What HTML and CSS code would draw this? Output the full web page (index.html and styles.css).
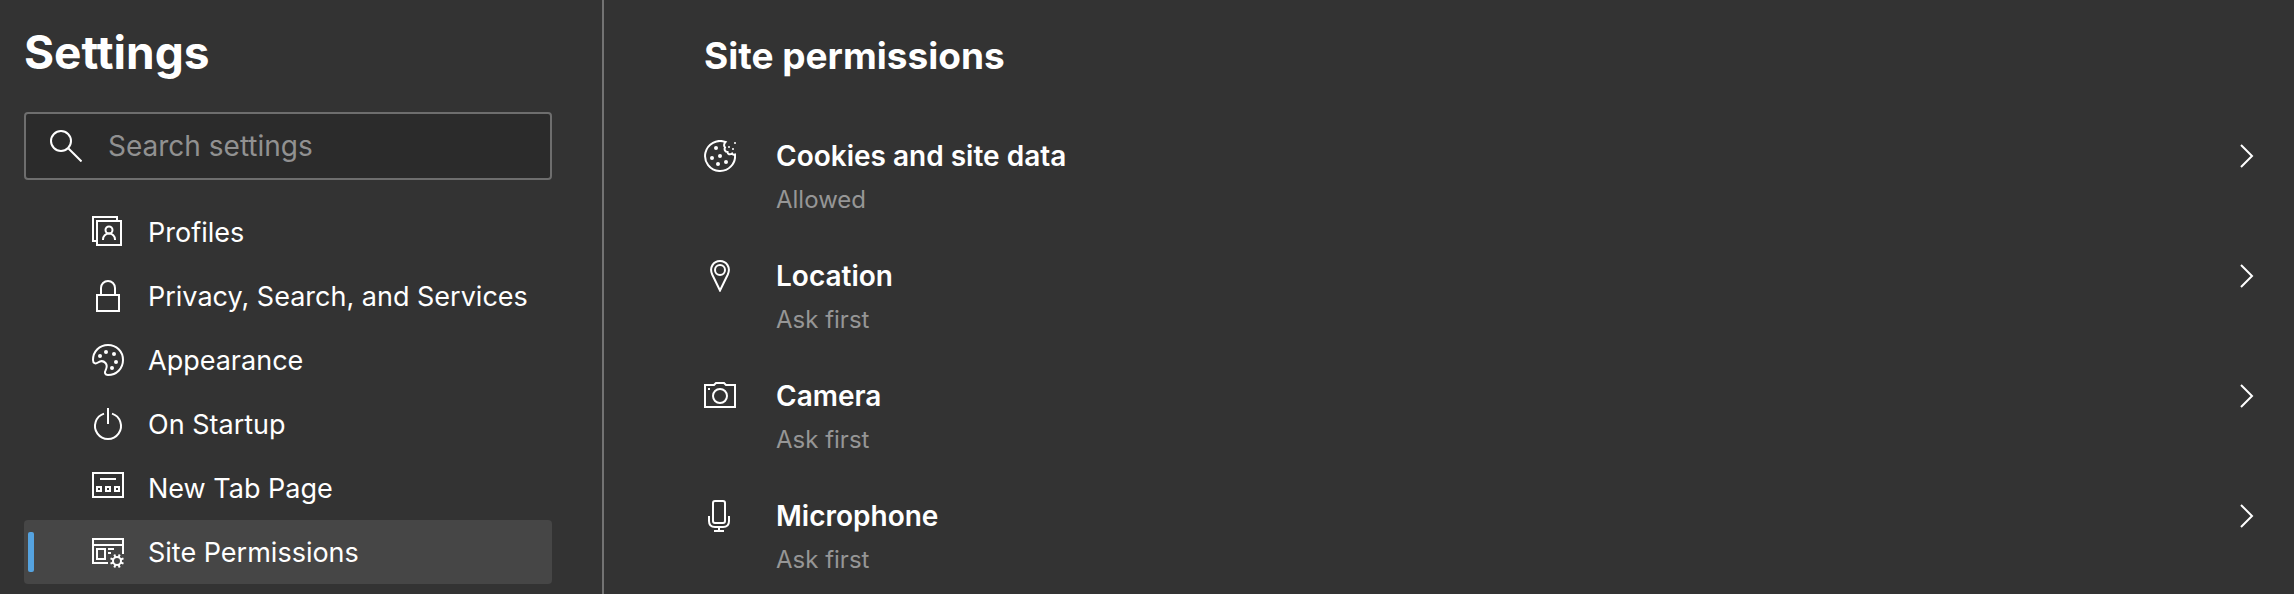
FILE: index.html
```html
<!DOCTYPE html>
<html lang="en">
<head>
  <meta charset="UTF-8" />
  <meta name="viewport" content="width=device-width, initial-scale=1.0"/>
  <title>Settings</title>
  <link rel="stylesheet" href="styles.css">
</head>
<body>

  <!-- Sidebar -->
  <aside class="sidebar">
    <h1 class="sidebar-title">Settings</h1>

    <label class="search">
      <svg class="icon" viewBox="0 0 32 32" aria-hidden="true">
        <circle cx="11" cy="11" r="10"/>
        <path d="M18.5 18.5L31.5 31.5"/>
      </svg>
      <input class="search-input" type="search" placeholder="Search settings" aria-label="Search settings">
    </label>

    <nav class="nav">
      <a class="nav-item" href="#profiles">
        <svg class="icon" viewBox="0 0 32 32" aria-hidden="true">
          <path d="M4 25H1V1H25V4"/>
          <rect x="5" y="5" width="24" height="24"/>
          <circle cx="17" cy="14" r="3.5"/>
          <path d="M11 24V23.5a6 6 0 0 1 12 0V24"/>
        </svg>
        Profiles
      </a>
      <a class="nav-item" href="#privacy">
        <svg class="icon" viewBox="0 0 32 32" aria-hidden="true">
          <rect x="5" y="15" width="22" height="16"/>
          <path d="M9 15V8a7 7 0 0 1 14 0V15"/>
        </svg>
        Privacy, Search, and Services
      </a>
      <a class="nav-item" href="#appearance">
        <svg class="icon" viewBox="0 0 32 32" aria-hidden="true">
          <path d="M1 16C1 7.5 7.5 1 16 1S31 7.5 31 16S24.5 31 16 31C13 31 12.3 28.5 13.5 26.5C15 23.5 15.3 21 13.5 19C11.5 16.8 8.5 16.8 6 18.5C3.5 20.2 1 19.5 1 16Z"/>
          <g class="fill">
            <circle cx="8" cy="12" r="2"/>
            <circle cx="14" cy="8" r="2"/>
            <circle cx="22" cy="10" r="2"/>
            <circle cx="24" cy="18" r="2"/>
            <circle cx="20" cy="24" r="2"/>
          </g>
        </svg>
        Appearance
      </a>
      <a class="nav-item" href="#startup">
        <svg class="icon" viewBox="0 0 32 32" aria-hidden="true">
          <path d="M12 5.6A13 13 0 1 0 20 5.6"/>
          <path d="M16 0V16"/>
        </svg>
        On Startup
      </a>
      <a class="nav-item" href="#newtab">
        <svg class="icon" viewBox="0 0 32 32" aria-hidden="true">
          <rect x="1" y="1" width="30" height="24"/>
          <path d="M8 7H24"/>
          <rect x="5" y="15" width="4" height="4"/>
          <rect x="14" y="15" width="4" height="4"/>
          <rect x="23" y="15" width="4" height="4"/>
        </svg>
        New Tab Page
      </a>
      <a class="nav-item active" href="#permissions" aria-current="page">
        <svg class="icon" viewBox="0 0 32 32" aria-hidden="true">
          <path d="M16 27H1V3H31V18M1 9H31"/>
          <rect x="5" y="13" width="8" height="10"/>
          <path d="M16 13H22M16 17H19"/>
          <circle cx="25" cy="25" r="4"/>
          <path d="M26.5 21.3L27.7 18.5M28.7 23.5L31.5 22.3M28.7 26.5L31.5 27.7M26.5 28.7L27.7 31.5M23.5 28.7L22.3 31.5M21.3 26.5L18.5 27.7M21.3 23.5L18.5 22.3M23.5 21.3L22.3 18.5"/>
        </svg>
        Site Permissions
      </a>
    </nav>
  </aside>

  <!-- Site permissions -->
  <main class="content">
    <h2 class="content-title">Site permissions</h2>

    <div class="permissions">
      <button class="permission" type="button">
        <svg class="icon" viewBox="0 0 32 32" aria-hidden="true">
          <path d="M21.5 2A15 15 0 1 0 31 14.5C29.5 15 28.5 14.5 28 13.5C26 15 23.5 14.3 23.5 12C21 12 20 9.5 21 7.5C19.5 6 20 3.5 21.5 2Z"/>
          <g class="fill">
            <circle cx="12" cy="8" r="2"/>
            <circle cx="8" cy="18" r="2"/>
            <circle cx="16" cy="16" r="2"/>
            <circle cx="14" cy="24" r="2"/>
            <circle cx="22" cy="22" r="2"/>
            <circle cx="31" cy="3" r="1"/>
            <circle cx="25" cy="7" r="1"/>
            <circle cx="29" cy="9" r="1"/>
          </g>
        </svg>
        <span class="permission-text">
          <span class="permission-name">Cookies and site data</span>
          <span class="permission-state">Allowed</span>
        </span>
        <svg class="chevron" viewBox="0 0 16 24" aria-hidden="true"><path d="M3 1L14 12L3 23"/></svg>
      </button>

      <button class="permission" type="button">
        <svg class="icon" viewBox="0 0 32 32" aria-hidden="true">
          <path d="M16 30.5L8.2 14.5C5 7.5 9.5 1 16 1S27 7.5 23.8 14.5Z"/>
          <circle cx="16" cy="10" r="5"/>
        </svg>
        <span class="permission-text">
          <span class="permission-name">Location</span>
          <span class="permission-state">Ask first</span>
        </span>
        <svg class="chevron" viewBox="0 0 16 24" aria-hidden="true"><path d="M3 1L14 12L3 23"/></svg>
      </button>

      <button class="permission" type="button">
        <svg class="icon" viewBox="0 0 32 32" aria-hidden="true">
          <path d="M1 5H10L12 3H20L22 5H31V27H1Z"/>
          <circle cx="16" cy="16" r="7"/>
          <rect class="fill" x="4" y="8" width="2" height="2"/>
        </svg>
        <span class="permission-text">
          <span class="permission-name">Camera</span>
          <span class="permission-state">Ask first</span>
        </span>
        <svg class="chevron" viewBox="0 0 16 24" aria-hidden="true"><path d="M3 1L14 12L3 23"/></svg>
      </button>

      <button class="permission" type="button">
        <svg class="icon" viewBox="0 0 32 32" aria-hidden="true">
          <rect x="9" y="1" width="12" height="22" rx="2"/>
          <path d="M5 16V21C5 25 7 27 11 27H19C23 27 25 25 25 21V16"/>
          <path d="M15 27V31M10 31H20"/>
        </svg>
        <span class="permission-text">
          <span class="permission-name">Microphone</span>
          <span class="permission-state">Ask first</span>
        </span>
        <svg class="chevron" viewBox="0 0 16 24" aria-hidden="true"><path d="M3 1L14 12L3 23"/></svg>
      </button>
    </div>
  </main>

</body>
</html>
```
FILE: styles.css
```css
* {
  box-sizing: border-box;
}

body {
  background-color: #333;
  color: white;
  font-family: Inter, "Liberation Sans", sans-serif;
  font-size: 27px;
  margin: 0;
  min-height: 100vh;
  display: flex;
}

.icon {
  width: 32px;
  height: 32px;
  flex-shrink: 0;
}

.icon,
.chevron {
  fill: none;
  stroke: white;
  stroke-width: 2;
}

.fill {
  fill: white;
  stroke: none;
}

/* Sidebar */
.sidebar {
  width: 604px;
  flex-shrink: 0;
  padding: 22px 50px 8px 24px;
  border-right: 2px solid #737373;
}

.sidebar-title {
  margin: 0 0 30px;
  font-size: 46px;
  line-height: 60px;
  font-weight: 700;
}

.search {
  display: flex;
  align-items: center;
  gap: 26px;
  height: 68px;
  margin-bottom: 20px;
  padding: 0 24px;
  background-color: #2b2b2b;
  border: 2px solid #6e6e6e;
  border-radius: 4px;
}

.search-input {
  flex: 1;
  min-width: 0;
  padding: 0;
  background: none;
  border: none;
  outline: none;
  color: white;
  font: inherit;
  font-size: 28px;
}

.search-input::placeholder {
  color: #919191;
  opacity: 1;
}

.nav-item {
  position: relative;
  display: flex;
  align-items: center;
  gap: 24px;
  height: 64px;
  padding-left: 68px;
  color: white;
  text-decoration: none;
  white-space: nowrap;
  border-radius: 4px;
}

.nav-item.active {
  background-color: #464646;
}

.nav-item.active::before {
  content: "";
  position: absolute;
  left: 4px;
  top: 12px;
  bottom: 12px;
  width: 6px;
  background-color: #55a3e0;
  border-radius: 2px;
}

/* Content */
.content {
  flex: 1;
  padding: 28px 40px 0 100px;
}

.content-title {
  margin: 0 0 52px;
  font-size: 37px;
  line-height: 56px;
  font-weight: 700;
}

.permissions {
  display: flex;
  flex-direction: column;
  gap: 32px;
}

.permission {
  display: flex;
  align-items: flex-start;
  width: 100%;
  padding: 0;
  background: none;
  border: none;
  color: white;
  font: inherit;
  text-align: left;
  cursor: pointer;
}

.permission .icon {
  margin-top: 4px;
}

.permission-text {
  flex: 1;
  display: flex;
  flex-direction: column;
  margin-left: 40px;
}

.permission-name {
  font-size: 28px;
  font-weight: 600;
  line-height: 40px;
}

.permission-state {
  color: #969696;
  font-size: 24px;
  line-height: 48px;
}

.chevron {
  width: 16px;
  height: 24px;
  margin-top: 8px;
}
```
